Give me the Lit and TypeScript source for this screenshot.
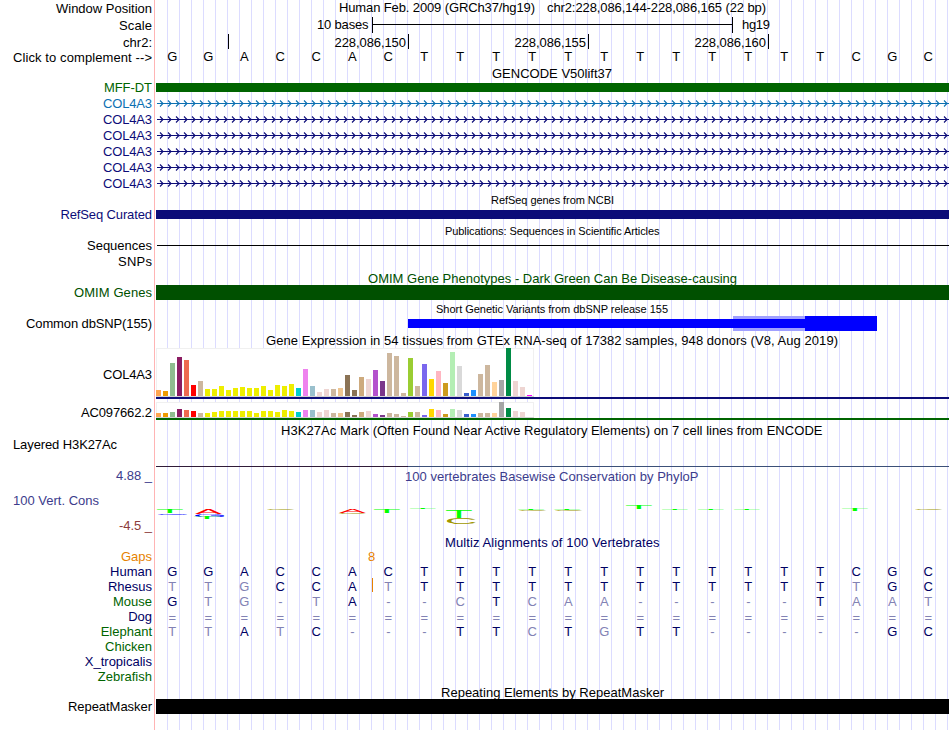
import { LitElement, html, svg, css, nothing } from "lit";
import type { TemplateResult } from "lit";
import { customElement, property } from "lit/decorators.js";

type Label = { text: string; tone?: string; top?: number; width?: number };

const LEFT = 156;
const RIGHT = 949;
const STEP = 36;
const FIRST_BASE = 172.3;

const REFERENCE = "GGACCACTTTTTTTTTTTTCGC";

const SPECIES = [
  { name: "Human", tone: "navy", bases: REFERENCE },
  { name: "Rhesus", tone: "navy", bases: "TTGCCATTTTTTTTTTTTTTGC" },
  { name: "Mouse", tone: "green", bases: "GTG-TA--CTCAA-----TAAT" },
  { name: "Dog", tone: "navy", bases: "======================" },
  { name: "Elephant", tone: "green", bases: "TTATC---TTCTGTT-----GC" },
  { name: "Chicken", tone: "green", bases: "" },
  { name: "X_tropicalis", tone: "navy", bases: "" },
  { name: "Zebrafish", tone: "green", bases: "" },
];

const TISSUE_COLORS = [
  "#ffa54f", "#ee9a00", "#8fbc8f", "#8b1c62", "#ee6a50", "#ff0000", "#cdb79e",
  ...Array(13).fill("#eeee00"),
  "#00cdcd", "#ee82ee", "#9ac0cd", "#eed5d2", "#eed5d2", "#cdb79e", "#eec591",
  "#8b7355", "#8b7355", "#cdaa7d", "#eed5d2", "#b452cd", "#7a378b", "#cdb79e",
  "#cdb79e", "#cdb79e", "#9acd32", "#cdb79e", "#7a67ee", "#ffd700", "#ffb6c1",
  "#cd9b1d", "#b4eeb4", "#d9d9d9", "#3a5fcd", "#1e90ff", "#cdb79e", "#cdb79e",
  "#ffd39b", "#a6a6a6", "#008b45", "#eed5d2", "#eed5d2", "#ff00ff",
];

const COL4A3_LEVELS = [
  6, 5, 33, 39, 36, 11, 15, 7, 7, 10, 6, 8, 9, 8, 8, 10, 6, 11, 10, 12, 8, 27,
  10, 4, 7, 7, 8, 21, 6, 19, 17, 26, 15, 43, 40, 3, 38, 10, 32, 17, 25, 13, 44,
  30, 3, 6, 22, 31, 14, 16, 48, 15, 9, 1,
];

const AC097662_LEVELS = [
  4, 4, 5, 8, 7, 6, 4, 4, 5, 6, 6, 6, 6, 6, 4, 6, 6, 5, 7, 6, 5, 7, 7, 5, 7, 4,
  4, 5, 2, 5, 6, 3, 2, 4, 3, 1, 5, 5, 2, 8, 7, 3, 8, 7, 3, 3, 4, 4, 4, 15, 9, 6,
  5, 0,
];

// letter, left, top, width, height, color
const LOGO: [string, number, number, number, number, string][] = [
  ["T", 157, 509, 26, 4, "#00ff00"],
  ["G", 158, 513.5, 30, 1.4, "#0000ff"],
  ["A", 195, 509, 27, 5, "#ff0000"],
  ["G", 195, 514, 30, 3, "#0000ff"],
  ["T", 194, 516.8, 26, 2.2, "#00ff00"],
  ["C", 267, 509, 28, 1, "#a09600"],
  ["A", 339, 509, 27, 4, "#ff0000"],
  ["C", 339, 513, 28, 0.7, "#a09600"],
  ["T", 374, 509, 26, 4, "#00ff00"],
  ["T", 410, 508, 26, 1, "#00ff00"],
  ["T", 446, 510, 26, 8, "#00ff00"],
  ["C", 447, 518, 29, 6, "#a09600"],
  ["T", 518, 509, 26, 0.8, "#00ff00"],
  ["C", 519, 510, 28, 1, "#a09600"],
  ["T", 554, 509, 26, 0.8, "#00ff00"],
  ["C", 555, 510, 28, 1, "#a09600"],
  ["T", 626, 505, 26, 4, "#00ff00"],
  ["T", 662, 509, 26, 1, "#00ff00"],
  ["T", 698, 509, 26, 1, "#00ff00"],
  ["T", 734, 509, 26, 1, "#00ff00"],
  ["T", 842, 509, 26, 2, "#00ff00"],
  ["C", 915, 509, 28, 1, "#a09600"],
];

// Ink box of the letters at 100px: left bearing, ink width, ink height
const GLYPH_BOX: Record<string, [number, number, number]> = {
  T: [2, 57, 69],
  G: [5, 68, 71],
  A: [0, 67, 69],
  C: [5, 64, 71],
};

const text = (x: number, y: number, width: number, value: string, tone = "") =>
  svg`<text class=${tone} x=${x} y=${y} textLength=${width}>${value}</text>`;

const bar = (x: number, y: number, width: number, height: number, fill: string) =>
  svg`<rect x=${x} y=${y} width=${width} height=${height} fill=${fill}></rect>`;

@customElement("track-row")
export class TrackRow extends LitElement {
  @property({ type: Number }) height = 16;
  @property({ attribute: false }) labels: Label[] = [];
  @property({ attribute: false }) content: unknown = nothing;

  static styles = css`
    :host {
      display: block;
      flex: none;
    }

    .row {
      display: flex;
      gap: 4px;
    }

    .labels,
    .track {
      display: block;
      flex: none;
      overflow: visible;
    }

    text {
      font-family: "Liberation Sans", Arial, Helvetica, sans-serif;
      font-size: 13px;
      fill: #000;
    }

    .end {
      text-anchor: end;
    }

    .base {
      text-anchor: middle;
    }

    .small {
      font-size: 11px;
    }

    .logo {
      font-size: 100px;
    }

    .navy {
      fill: #000064;
    }

    .indigo {
      fill: #0c0c78;
    }

    .sky {
      fill: #0c70b2;
    }

    .green {
      fill: #006400;
    }

    .forest {
      fill: #005000;
    }

    .violet {
      fill: #3c3c8c;
    }

    .maroon {
      fill: #8c3c3c;
    }

    .orange {
      fill: #e68200;
    }

    .faded {
      fill: #8282b4;
    }
  `;

  private _renderLabel(label: Label) {
    const baseline = (label.top ?? 0) + 12;
    const { text: value, tone = "", width } = label;
    // Labels of the wiggle tracks start at the left margin
    if (tone.includes("start")) {
      return svg`<text class=${tone} x="13" y=${baseline} textLength=${width ?? nothing}>${value}</text>`;
    }
    return svg`<text class="end ${tone}" x="152" y=${baseline} textLength=${width ?? nothing}>${value}</text>`;
  }

  render() {
    return html`
      <div class="row">
        <svg class="labels" width="152" height=${this.height}>
          ${this.labels.map((label) => this._renderLabel(label))}
        </svg>
        <svg
          class="track"
          width="794"
          height=${this.height}
          viewBox="156 0 794 ${this.height}"
        >
          ${this.content}
        </svg>
      </div>
    `;
  }
}

@customElement("app-root")
export class AppRoot extends LitElement {
  static styles = css`
    :host {
      display: flex;
      flex-direction: column;
      box-sizing: border-box;
      width: 950px;
      height: 730px;
      overflow: hidden;
      background:
        linear-gradient(#ffb4b4, #ffb4b4) 154px 0 / 1px 100% no-repeat,
        linear-gradient(#fff, #fff) 0 0 / 156px 100% no-repeat,
        linear-gradient(90deg, #dcdcff 1px, transparent 1px) 167px 0 / 12px 100%,
        #fff;
    }
  `;

  private _row(height: number, labels: Label[], content: unknown = nothing): TemplateResult {
    return html`<track-row
      .height=${height}
      .labels=${labels}
      .content=${content}
    ></track-row>`;
  }

  private _title(height: number, x: number, baseline: number, width: number, value: string, tone = "") {
    return this._row(height, [], text(x, baseline, width, value, tone));
  }

  private _renderRuler() {
    const ticks = [228, 408, 588, 768];
    const positions = ["", "228,086,150", "228,086,155", "228,086,160"];
    return html`
      ${this._row(
        16,
        [{ text: "Window Position", top: 1, width: 96 }],
        svg`${text(339, 12, 196, "Human Feb. 2009 (GRCh37/hg19)")}
          ${text(547, 12, 219, "chr2:228,086,144-228,086,165 (22 bp)")}`
      )}
      ${this._row(
        17,
        [{ text: "Scale", top: 2, width: 33 }],
        svg`${text(317, 13, 51.5, "10 bases")}
          ${bar(372, 1, 1, 16, "#000")}
          ${bar(372, 8, 361, 1, "#000")}
          ${bar(732, 1, 1, 16, "#000")}
          ${text(742, 13, 28, "hg19")}`
      )}
      ${this._row(
        16,
        [{ text: "chr2:", top: 2, width: 29 }],
        ticks.map(
          (x, i) => svg`
            ${positions[i] ? text(x - 73.5, 14, 71.5, positions[i]) : nothing}
            ${bar(x, 1, 1, 15, "#000")}
          `
        )
      )}
      ${this._row(
        16,
        [{ text: "Click to complement -->", top: 1, width: 139 }],
        this._renderBases(REFERENCE, "", 12)
      )}
    `;
  }

  private _renderBases(bases: string, tone: string, baseline: number) {
    return [...bases].map((base, i) => {
      const shade = tone && base !== REFERENCE[i] ? "faded" : tone;
      const y = base === "=" ? baseline + 1 : baseline;
      return svg`<text class="base ${shade}" x=${FIRST_BASE + i * STEP} y=${y}>${base}</text>`;
    });
  }

  private _renderTranscript(color: string, tone: string) {
    let arrows = "";
    for (let x = 163; x < RIGHT; x += 8) {
      arrows += `M${x - 3} 5.5L${x} 8.5L${x - 3} 11.5`;
    }
    return this._row(
      16,
      [{ text: "COL4A3", top: 1, width: 49, tone }],
      svg`${bar(157, 8, RIGHT - 157, 1, color)}
        <path d=${arrows} fill="none" stroke=${color} stroke-width="1.1"></path>`
    );
  }

  private _renderExpression(levels: number[], top: number, bottom: number, model: string) {
    return svg`
      <rect x="156.5" y=${top + 0.5} width="377" height=${bottom - top} fill="#fff" stroke="#f0f0f0"></rect>
      ${bar(156, bottom, 378, 1, "#d2d2d2")}
      ${levels.map((level, i) => bar(LEFT + i * 7, bottom - level, 5, level, TISSUE_COLORS[i]))}
      ${bar(LEFT, bottom + 1, RIGHT - LEFT, 2, model)}
    `;
  }

  private _renderLogo() {
    return LOGO.map(([letter, x, y, width, height, color]) => {
      const [bearing, inkWidth, inkHeight] = GLYPH_BOX[letter];
      const sx = width / inkWidth;
      const sy = height / inkHeight;
      return svg`<text
        class="logo"
        style="fill:${color}"
        transform="translate(${x - bearing * sx} ${y - 468 + height}) scale(${sx} ${sy})"
      >${letter}</text>`;
    });
  }

  render() {
    const full = RIGHT - LEFT;

    return html`
      ${this._renderRuler()}

      ${this._title(15, 492, 13, 120, "GENCODE V50lift37")}
      ${this._row(15, [{ text: "MFF-DT", tone: "green", width: 48 }], bar(LEFT, 3, full, 9, "#006400"))}
      ${this._renderTranscript("#0c70b2", "sky")}
      ${Array.from({ length: 5 }, () => this._renderTranscript("#0c0c78", "indigo"))}

      ${this._title(15, 491, 13, 123, "RefSeq genes from NCBI", "small")}
      ${this._row(16, [{ text: "RefSeq Curated", tone: "indigo", top: 1, width: 91.5 }], bar(LEFT, 4, full, 9, "#0c0c78"))}

      ${this._title(16, 445, 13, 214.5, "Publications: Sequences in Scientific Articles", "small")}
      ${this._row(16, [{ text: "Sequences", width: 65 }], bar(157, 7, full - 1, 1, "#000"))}
      ${this._row(16, [{ text: "SNPs", width: 34 }])}

      ${this._title(15, 368, 13, 369, "OMIM Gene Phenotypes - Dark Green Can Be Disease-causing", "forest")}
      ${this._row(16, [{ text: "OMIM Genes", tone: "forest", width: 78 }], bar(LEFT, 0, full, 15, "#005000"))}

      ${this._title(15, 436, 12, 232, "Short Genetic Variants from dbSNP release 155", "small")}
      ${this._row(
        16,
        [{ text: "Common dbSNP(155)", width: 126 }],
        svg`${bar(733, 0, 72, 15, "#a0a0ff")}
          ${bar(408, 3, 397, 9, "#0000ff")}
          ${bar(805, 0, 72, 15, "#0000ff")}`
      )}

      ${this._title(16, 266, 13, 572, "Gene Expression in 54 tissues from GTEx RNA-seq of 17382 samples, 948 donors (V8, Aug 2019)")}
      ${this._row(52, [{ text: "COL4A3", top: 19, width: 49 }], this._renderExpression(COL4A3_LEVELS, 0, 48, "#0c0c78"))}
      ${this._row(21, [{ text: "AC097662.2", top: 5, width: 71 }], this._renderExpression(AC097662_LEVELS, 2, 17, "#006400"))}

      ${this._title(16, 281, 14, 541.5, "H3K27Ac Mark (Often Found Near Active Regulatory Elements) on 7 cell lines from ENCODE")}
      ${this._row(
        31,
        [{ text: "Layered H3K27Ac", tone: "start", width: 104 }],
        svg`${bar(LEFT, 29, 252, 1, "#301c38")}${bar(408, 29, RIGHT - 408, 1, "#3c5078")}`
      )}

      ${this._row(
        66,
        [
          { text: "4.88 _", tone: "violet", width: 36 },
          { text: "100 Vert. Cons", tone: "start violet", top: 25, width: 86 },
          { text: "-4.5 _", tone: "maroon", top: 50, width: 33 },
        ],
        svg`${text(405, 13, 293.5, "100 vertebrates Basewise Conservation by PhyloP", "violet")}
          ${this._renderLogo()}`
      )}

      ${this._title(15, 445, 13, 214.5, "Multiz Alignments of 100 Vertebrates", "navy")}
      ${this._row(
        15,
        [{ text: "Gaps", tone: "orange", width: 31 }],
        svg`<text class="base orange" x="371.5" y="12">8</text>`
      )}
      ${SPECIES.map(({ name, tone, bases }) =>
        this._row(
          15,
          [{ text: name, tone }],
          svg`${this._renderBases(bases, "navy", 12)}
            ${name === "Rhesus" ? bar(372, -1, 1, 14, "#e68200") : nothing}`
        )
      )}

      ${this._title(15, 441, 13, 223, "Repeating Elements by RepeatMasker")}
      ${this._row(31, [{ text: "RepeatMasker", width: 84 }], bar(LEFT, 0, full, 15, "#000"))}
    `;
  }
}
